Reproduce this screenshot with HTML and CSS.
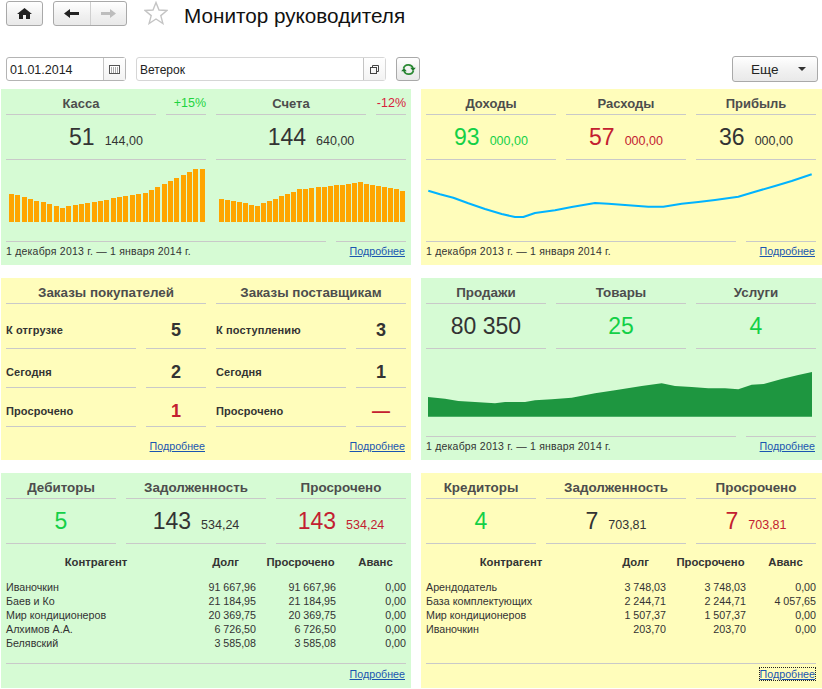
FILE: index.html
```html
<!DOCTYPE html>
<html lang="ru">
<head>
<meta charset="utf-8">
<title>Монитор руководителя</title>
<link rel="stylesheet" href="styles.css">
</head>
<body>
<header class="topbar">
  <button class="btn btn-home" aria-label="Домой"><svg width="15" height="11" viewBox="0 0 15 11"><path d="M7.5 0 L15 6 H13 V11 H9 V7 H6 V11 H2 V6 H0 Z" fill="#222"/></svg></button>
  <div class="btn btn-nav">
    <span class="nav-cell"><svg width="15" height="9" viewBox="0 0 15 9"><path d="M0 4.5 L6 0 V3 H15 V6 H6 V9 Z" fill="#222"/></svg></span>
    <span class="nav-cell nav-next"><svg width="15" height="9" viewBox="0 0 15 9"><path d="M15 4.5 L9 0 V3 H0 V6 H9 V9 Z" fill="#bdbdbd"/></svg></span>
  </div>
  <svg class="star" width="24" height="24" viewBox="0 0 24 24"><path d="M12 1.5 L15 9 L23 9.5 L16.8 14.6 L18.9 22.5 L12 18 L5.1 22.5 L7.2 14.6 L1 9.5 L9 9 Z" fill="#fff" stroke="#c4c4c4" stroke-width="1.4"/></svg>
  <h1 class="page-title">Монитор руководителя</h1>
</header>

<div class="filters">
  <div class="field field-date"><span class="field-text">01.01.2014</span><span class="field-btn"><svg width="11" height="9" viewBox="0 0 11 9"><rect x="0.5" y="0.5" width="10" height="8" fill="#fff" stroke="#555"/><path d="M2 3h1M4 3h1M6 3h1M8 3h1M2 5h1M4 5h1M6 5h1M8 5h1M2 7h1M4 7h1M6 7h1M8 7h1" stroke="#555" stroke-width="1"/></svg></span></div>
  <div class="field field-org"><span class="field-text field-text-org">Ветерок</span><span class="field-btn"><svg width="9" height="9" viewBox="0 0 9 9"><path d="M2.5 2.5 V0.5 H8.5 V6.5 H6.5" fill="none" stroke="#444"/><rect x="0.5" y="2.5" width="6" height="6" fill="none" stroke="#444"/></svg></span></div>
  <button class="btn btn-refresh" aria-label="Обновить"><svg width="15" height="15" viewBox="0 0 15 15"><path d="M2.5 6.5 A5 5 0 0 1 12 6" fill="none" stroke="#2d8a35" stroke-width="1.7"/><path d="M9.2 5.8 H14.8 L12 9 Z" fill="#1f7a2c"/><path d="M12.5 8.5 A5 5 0 0 1 3 9" fill="none" stroke="#2d8a35" stroke-width="1.7"/><path d="M0.2 9.2 H5.8 L3 6 Z" fill="#1f7a2c"/></svg></button>
  <button class="btn btn-more"><span>Еще</span><i class="caret"></i></button>
</div>

<main class="dashboard">
  <section class="panel green">
    <div class="cols">
      <div class="col w200">
        <div class="row"><div class="head w150">Касса</div><div class="head w40 pct up">+15%</div></div>
        <div class="bignum">51<small>144,00</small></div>
        <svg class="chart chart-bars" width="197" height="62" viewBox="0 0 197 62" id="bars1"></svg>
      </div>
      <div class="col w190">
        <div class="row"><div class="head w150">Счета</div><div class="head w30 pct down">-12%</div></div>
        <div class="bignum">144<small>640,00</small></div>
        <svg class="chart chart-bars" width="187" height="62" viewBox="0 0 187 62" id="bars2"></svg>
      </div>
    </div>
    <div class="foot"><div class="foot-text w320">1 декабря 2013 г. — 1 января 2014 г.</div><div class="foot-link w70"><a href="#">Подробнее</a></div></div>
  </section>

  <section class="panel yellow p-right">
    <div class="row">
      <div class="stat w130"><div class="head">Доходы</div><div class="bignum green-t">93<small>000,00</small></div></div>
      <div class="stat w120"><div class="head">Расходы</div><div class="bignum red-t">57<small>000,00</small></div></div>
      <div class="stat w120"><div class="head">Прибыль</div><div class="bignum">36<small>000,00</small></div></div>
    </div>
    <svg class="chart" width="390" height="62" viewBox="0 0 390 62"><path d="M2.3 30.7 L14 34.3 L27.3 37.7 L42.3 43.3 L59 49 L75.7 54 L89 57 L97.3 57 L109 53 L129 50.3 L145.7 47 L169 43 L182.3 43.7 L202.3 45.3 L222.3 46.7 L237.3 46.7 L255.7 43.7 L272.3 42 L289 40 L312.3 36.7 L329 31.7 L349 26 L365.7 21 L385.7 14.3" fill="none" stroke="#00b3ff" stroke-width="2" stroke-linejoin="round"/></svg>
    <div class="foot"><div class="foot-text w310">1 декабря 2013 г. — 1 января 2014 г.</div><div class="foot-link w70"><a href="#">Подробнее</a></div></div>
  </section>

  <section class="panel yellow">
    <div class="cols">
      <div class="col w200">
        <div class="head head-lg">Заказы покупателей</div>
        <div class="order-row"><div class="order-label">К отгрузке</div><div class="order-val">5</div></div>
        <div class="order-row"><div class="order-label">Сегодня</div><div class="order-val">2</div></div>
        <div class="order-row"><div class="order-label">Просрочено</div><div class="order-val red-t">1</div></div>
        <div class="orders-link"><a href="#">Подробнее</a></div>
      </div>
      <div class="col w190">
        <div class="head head-lg">Заказы поставщикам</div>
        <div class="order-row"><div class="order-label">К поступлению</div><div class="order-val">3</div></div>
        <div class="order-row"><div class="order-label">Сегодня</div><div class="order-val">1</div></div>
        <div class="order-row"><div class="order-label">Просрочено</div><div class="order-val red-t">—</div></div>
        <div class="orders-link"><a href="#">Подробнее</a></div>
      </div>
    </div>
  </section>

  <section class="panel green p-right">
    <div class="row">
      <div class="stat w120"><div class="head head-lg">Продажи</div><div class="bignum">80 350</div></div>
      <div class="stat w130"><div class="head head-lg">Товары</div><div class="bignum green-t">25</div></div>
      <div class="stat w120"><div class="head head-lg">Услуги</div><div class="bignum green-t">4</div></div>
    </div>
    <svg class="chart" width="390" height="70" viewBox="0 0 390 70"><path d="M2 48 L19 49.7 L32.3 52 L49 53 L69 54.3 L79 53 L99 53 L109 51.3 L125.7 50.3 L145.7 48.7 L169 44.3 L189 41.3 L215.7 37 L235.7 34.3 L249 37 L265.7 38 L282.3 39.3 L299 39.3 L312.3 40.3 L325.7 35.7 L337.7 35 L355.7 30 L372.3 26 L386 23 V67.7 H2 Z" fill="#1e9640"/></svg>
    <div class="foot"><div class="foot-text w310">1 декабря 2013 г. — 1 января 2014 г.</div><div class="foot-link w70"><a href="#">Подробнее</a></div></div>
  </section>

  <section class="panel green">
    <div class="row">
      <div class="stat w110"><div class="head head-lg">Дебиторы</div><div class="bignum green-t">5</div></div>
      <div class="stat w140"><div class="head head-lg">Задолженность</div><div class="bignum">143<small>534,24</small></div></div>
      <div class="stat w130"><div class="head head-lg">Просрочено</div><div class="bignum red-t">143<small>534,24</small></div></div>
    </div>
    <table class="debts">
      <thead><tr><th class="c-name">Контрагент</th><th class="c-a">Долг</th><th class="c-b">Просрочено</th><th class="c-c">Аванс</th></tr></thead>
      <tbody>
        <tr><td>Иваночкин</td><td>91 667,96</td><td>91 667,96</td><td>0,00</td></tr>
        <tr><td>Баев и Ко</td><td>21 184,95</td><td>21 184,95</td><td>0,00</td></tr>
        <tr><td>Мир кондиционеров</td><td>20 369,75</td><td>20 369,75</td><td>0,00</td></tr>
        <tr><td>Алхимов А.А.</td><td>6 726,50</td><td>6 726,50</td><td>0,00</td></tr>
        <tr><td>Белявский</td><td>3 585,08</td><td>3 585,08</td><td>0,00</td></tr>
      </tbody>
    </table>
    <div class="table-foot"><a href="#">Подробнее</a></div>
  </section>

  <section class="panel yellow p-right">
    <div class="row">
      <div class="stat w110"><div class="head head-lg">Кредиторы</div><div class="bignum green-t">4</div></div>
      <div class="stat w140"><div class="head head-lg">Задолженность</div><div class="bignum">7<small>703,81</small></div></div>
      <div class="stat w120"><div class="head head-lg">Просрочено</div><div class="bignum red-t">7<small>703,81</small></div></div>
    </div>
    <table class="debts">
      <thead><tr><th class="c-name">Контрагент</th><th class="c-a">Долг</th><th class="c-b">Просрочено</th><th class="c-c">Аванс</th></tr></thead>
      <tbody>
        <tr><td>Арендодатель</td><td>3 748,03</td><td>3 748,03</td><td>0,00</td></tr>
        <tr><td>База комплектующих</td><td>2 244,71</td><td>2 244,71</td><td>4 057,65</td></tr>
        <tr><td>Мир кондиционеров</td><td>1 507,37</td><td>1 507,37</td><td>0,00</td></tr>
        <tr><td>Иваночкин</td><td>203,70</td><td>203,70</td><td>0,00</td></tr>
      </tbody>
    </table>
    <div class="table-foot"><a href="#" class="focused">Подробнее</a></div>
  </section>
</main>
<script src="bars.js"></script>
</body>
</html>
```
FILE: bars.js
```js
var sets = [
  ["bars1", [0,6,13,19,25,32,38,45,51,57,64,70,76,83,89,95,102,108,114,121,127,134,140,146,153,159,165,172,178,184,191],
   [28,27,25,23,21,20,18,16,14,16,17,18,19,20,21,22,24,25,26,27,28,29,32,35,38,41,44,47,50,53,53]],
  ["bars2", [0,6,12,18,24,30,36,42,48,54,60,66,72,78,84,90,97,103,109,115,121,127,133,139,145,151,157,163,169,175,181],
   [23,22,21,20,19,17,16,19,21,23,26,28,30,33,33,34,35,35,36,37,37,38,39,40,38,37,36,35,34,33,31]]
];
sets.forEach(function (s) {
  var svg = document.getElementById(s[0]);
  var out = "";
  s[1].forEach(function (x, i) {
    var h = s[2][i];
    out += '<rect x="' + x + '" y="' + (62 - h) + '" width="5" height="' + h + '" fill="#ffa500"/>';
  });
  svg.innerHTML = out;
});
```
FILE: styles.css
```css
* { box-sizing: border-box; }
html, body { margin: 0; padding: 0; background: #fff; }
body { font-family: "Liberation Sans", Arial, sans-serif; color: #333; width: 822px; height: 689px; overflow: hidden; }
a { color: #1a55b0; font-size: 10.7px; }

.btn {
  border: 1px solid #a9a9a9; border-radius: 3px; padding: 0; margin: 0;
  background: linear-gradient(#fff, #f0f0f0 60%, #e9e9e9);
  display: flex; align-items: center; justify-content: center;
}
.topbar { display: flex; align-items: flex-start; height: 56px; padding: 1px 0 0 6px; }
.btn-home { width: 37px; height: 25px; margin-right: 10px; }
.btn-nav { width: 74px; height: 25px; }
.nav-cell { flex: 1; height: 100%; display: flex; align-items: center; justify-content: center; }
.nav-next { border-left: 1px solid #cfcfcf; }
.star { margin: 0 0 0 17px; flex: none; }
.page-title { margin: 3px 0 0 16px; font-size: 20.7px; font-weight: 400; color: #111; line-height: 24px; }

.filters { display: flex; align-items: center; height: 26px; padding: 0 4px 0 6px; }
.field { height: 24px; border: 1px solid #b4b4b4; border-radius: 3px; display: flex; align-items: stretch; background: #fff; font-size: 12.5px; color: #222; }
.field-date { width: 120px; margin-right: 10px; }
.field-org { width: 250px; margin-right: 10px; border-color: #d6d6d6; }
.field-text { flex: 1; padding-left: 3px; line-height: 24px; }
.field-text-org { font-size: 12px; }
.field-btn { width: 22px; border-left: 1px solid #c4c4c4; display: flex; align-items: center; justify-content: center; background: linear-gradient(#fff, #f3f3f3); }
.btn-refresh { width: 24px; height: 24px; }
.btn-more { width: 86px; height: 26px; margin-left: auto; font: 13.5px "Liberation Sans", Arial, sans-serif; color: #222; justify-content: flex-start; padding-left: 18px; }
.caret { width: 0; height: 0; margin-left: 20px; border: 4px solid transparent; border-top: 4px solid #333; border-bottom: 0; }

.dashboard { display: grid; grid-template-columns: 410px 401px; grid-template-rows: 176px 182px 215px; gap: 13px 10px; margin: 7px 0 0 1px; }
.panel { padding: 0 5px; display: flex; flex-direction: column; }
.p-right { padding-right: 6px; }
.green { background: #d6fbd4; }
.yellow { background: #fffdbb; }
.cols { display: flex; gap: 10px; }
.row { display: flex; gap: 10px; }
.col { flex: none; }
.stat { flex: none; }
.w30 { width: 30px; } .w40 { width: 40px; } .w70 { width: 70px; } .w110 { width: 110px; }
.w120 { width: 120px; } .w130 { width: 130px; } .w140 { width: 140px; } .w150 { width: 150px; }
.w190 { width: 190px; } .w200 { width: 200px; } .w310 { width: 310px; } .w320 { width: 320px; }

.head { height: 26px; border-bottom: 1px solid #c9c9c9; text-align: center; font-size: 13px; font-weight: 700; line-height: 29px; color: #4d4d4d; }
.head-lg { font-size: 13.4px; }
.pct { font-weight: 400; font-size: 12.5px; text-align: right; }
.up { color: #1ed43f; }
.down { color: #d8203c; }
.bignum { height: 45px; border-bottom: 1px solid #c9c9c9; text-align: center; font-size: 23px; line-height: 45px; color: #333; }
.bignum small { font-size: 12.5px; margin-left: 10px; }
.bignum.green-t { color: #13d047; }
.bignum.red-t { color: #c32030; }

.chart { display: block; flex: none; }
.chart-bars { margin-left: 3px; }

.foot { margin-top: auto; height: 24px; display: flex; gap: 10px; font-size: 10.5px; }
.foot-text { border-top: 1px solid #c9c9c9; padding-top: 2px; line-height: 14px; color: #333; letter-spacing: 0.02em; }
.foot-link { border-top: 1px solid #c9c9c9; text-align: right; padding: 2px 1px 0 0; line-height: 14px; }

.order-row { display: flex; gap: 10px; }
.order-label { width: 130px; height: 39px; padding-top: 13px; border-bottom: 1px solid #c9c9c9; font-size: 11px; font-weight: 700; color: #333; line-height: 20px; letter-spacing: 0.01em; }
.order-val { flex: 1; height: 39px; padding-top: 13px; border-bottom: 1px solid #c9c9c9; text-align: center; font-size: 18px; font-weight: 700; line-height: 20px; color: #333; }
.order-val.red-t { color: #c32030; }
.head + .order-row .order-label, .head + .order-row .order-val { height: 45px; padding-top: 16px; }
.orders-link { text-align: right; padding: 11px 1px 0 0; line-height: 14px; }

.debts { width: 100%; border-collapse: collapse; table-layout: fixed; font-size: 10.7px; color: #333; }
.debts th { font-size: 11.3px; font-weight: 700; padding: 0; height: 36px; text-align: center; }
.c-a, .c-b, .c-c { padding-left: 9px !important; }
.debts td { padding: 0; height: 14px; line-height: 14px; text-align: right; white-space: nowrap; }
.debts td:first-child { text-align: left; }
.c-a { width: 70px; }
.c-b { width: 80px; }
.c-c { width: 70px; }
.table-foot { margin-top: auto; height: 25px; border-top: 1px solid #c9c9c9; text-align: right; padding: 2px 1px 0 0; line-height: 14px; }
.focused { outline: 1px dotted #222; outline-offset: 0; }
```
